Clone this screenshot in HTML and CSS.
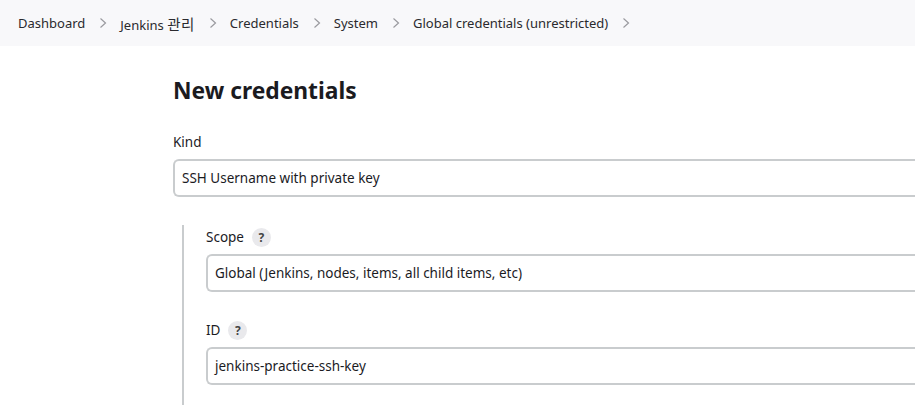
FILE: index.html
```html
<!DOCTYPE html>
<html lang="ko">
<head>
<meta charset="utf-8">
<title>New credentials</title>
<link rel="stylesheet" href="styles.css">
</head>
<body>
<nav class="breadcrumbs">
  <span class="crumb">Dashboard</span>
  <svg class="chev" viewBox="0 0 8 12" width="8" height="12"><path d="M1.5 1.5 L6.5 6 L1.5 10.5" fill="none" stroke="#9a9a9f" stroke-width="1.2"/></svg>
  <span class="crumb">Jenkins <span class="ko">관리</span></span>
  <svg class="chev" viewBox="0 0 8 12" width="8" height="12"><path d="M1.5 1.5 L6.5 6 L1.5 10.5" fill="none" stroke="#9a9a9f" stroke-width="1.2"/></svg>
  <span class="crumb">Credentials</span>
  <svg class="chev" viewBox="0 0 8 12" width="8" height="12"><path d="M1.5 1.5 L6.5 6 L1.5 10.5" fill="none" stroke="#9a9a9f" stroke-width="1.2"/></svg>
  <span class="crumb">System</span>
  <svg class="chev" viewBox="0 0 8 12" width="8" height="12"><path d="M1.5 1.5 L6.5 6 L1.5 10.5" fill="none" stroke="#9a9a9f" stroke-width="1.2"/></svg>
  <span class="crumb">Global credentials (unrestricted)</span>
  <svg class="chev" viewBox="0 0 8 12" width="8" height="12"><path d="M1.5 1.5 L6.5 6 L1.5 10.5" fill="none" stroke="#9a9a9f" stroke-width="1.2"/></svg>
</nav>
<main class="main">
  <h1 class="title">New credentials</h1>
  <div class="field">
    <div class="label">Kind</div>
    <div class="input">SSH Username with private key</div>
  </div>
  <div class="nested">
    <div class="field">
      <div class="label">Scope <span class="help">?</span></div>
      <div class="input">Global (Jenkins, nodes, items, all child items, etc)</div>
    </div>
    <div class="field">
      <div class="label">ID <span class="help">?</span></div>
      <div class="input">jenkins-practice-ssh-key</div>
    </div>
  </div>
</main>
</body>
</html>
```
FILE: styles.css
```css
html, body {
  margin: 0;
  padding: 0;
  background: #ffffff;
  overflow: hidden;
}
body {
  font-family: "Noto Sans", "Noto Sans CJK KR", sans-serif;
  font-size: 13.5px;
  color: #1b1b1f;
  width: 915px;
  height: 408px;
}
.breadcrumbs {
  height: 46px;
  background: #f8f8fa;
  display: flex;
  align-items: center;
  padding-left: 18px;
  box-sizing: border-box;
}
.crumb {
  color: #2a2a2e;
  font-size: 13px;
}
.ko {
  font-size: 14.5px;
  letter-spacing: 0.5px;
}
.chev {
  margin: 0 13px 0 14px;
}
.main {
  padding-left: 173px;
}
.title {
  margin: 0;
  padding-top: 29px;
  font-size: 22.8px;
  font-weight: 700;
  line-height: 32px;
  color: #1b1b1f;
}
.field {
  margin-top: 23px;
}
.label {
  display: flex;
  align-items: center;
  gap: 8px;
  height: 24px;
  margin-bottom: 5px;
}
.help {
  width: 19px;
  height: 19px;
  border-radius: 50%;
  background: #e9e9ec;
  color: #444;
  font-weight: 700;
  font-size: 12px;
  display: inline-flex;
  align-items: center;
  justify-content: center;
}
.input {
  height: 38px;
  box-sizing: border-box;
  border: 2px solid #c9ccce;
  border-right: none;
  border-radius: 6px 0 0 6px;
  padding-left: 7px;
  display: flex;
  align-items: center;
}
.nested {
  margin-top: 28px;
  margin-left: 9px;
  border-left: 2px solid #c9ccce;
  padding-left: 22px;
  padding-bottom: 20px;
}
.nested .field:first-child {
  margin-top: 0;
}
.nested .field {
  margin-top: 26px;
}
```
